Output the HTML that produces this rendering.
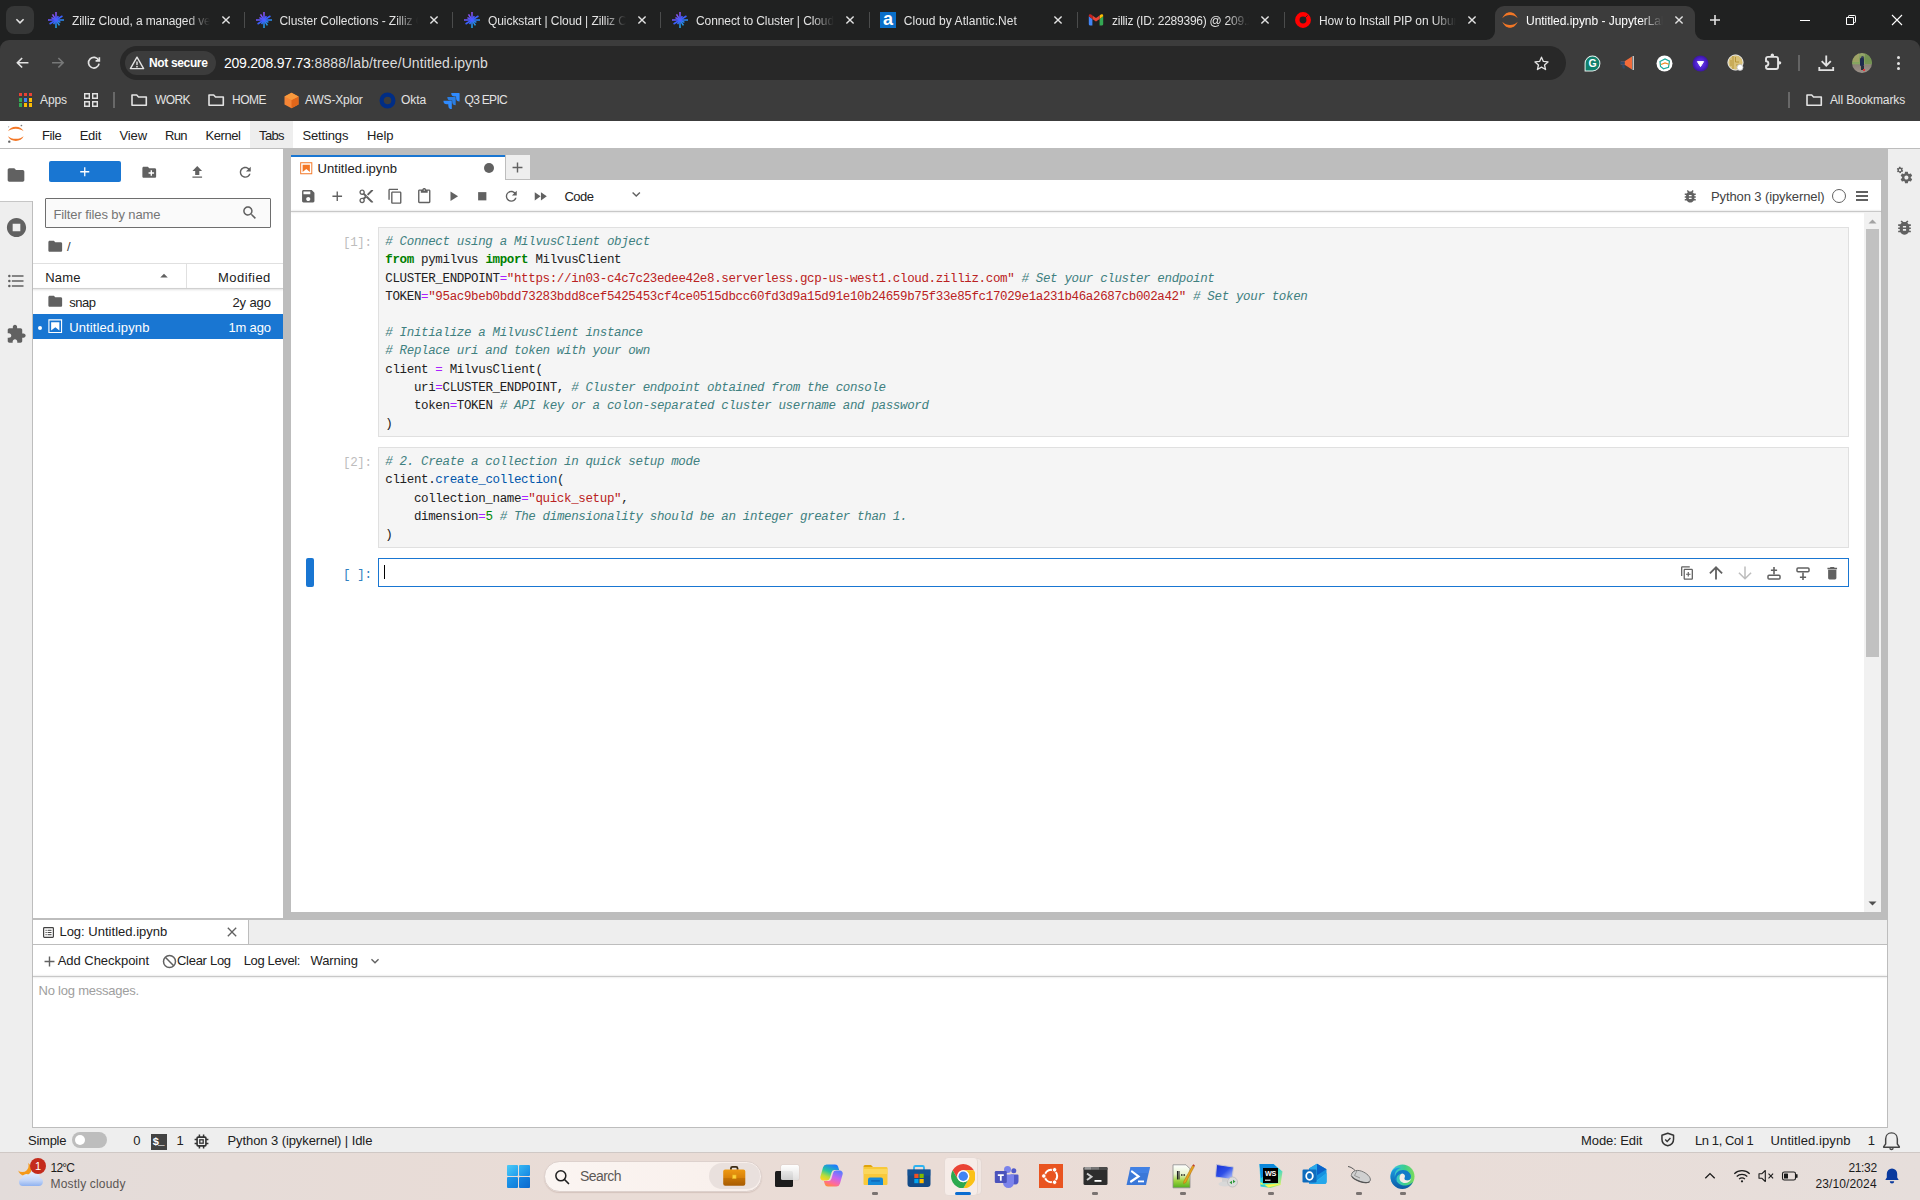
<!DOCTYPE html>
<html lang="en"><head><meta charset="utf-8"><title>Untitled.ipynb - JupyterLab</title>
<style>
html,body{margin:0;padding:0;}
body{width:1920px;height:1200px;overflow:hidden;position:relative;background:#fff;font-family:'Liberation Sans',sans-serif;}
.b{position:absolute;display:block;}
.t{position:absolute;white-space:pre;display:block;}
.code{position:absolute;white-space:pre;font-family:'Liberation Mono',monospace;font-size:12.5px;letter-spacing:-0.353px;line-height:18.19px;color:#212121;}
.code .c{color:#408080;font-style:italic;}
.code .k{color:#008000;font-weight:bold;}
.code .s{color:#ba2121;}
.code .o{color:#aa22ff;}
.code .p{color:#0055aa;}
.code .n{color:#008800;}
</style></head>
<body>
<div class="b" style="left:0px;top:121px;width:1920px;height:1031px;background:#fff;"></div>
<div class="b" style="left:0px;top:148px;width:1920px;height:1px;background:#bdbdbd;"></div>
<svg class="b" style="left:6.40px;top:124.40px;" width="19.6" height="19.6" viewBox="0 0 22 22"><path d="M2.2 8.2C3.6 4.9 7 3 11 3s7.4 1.9 8.8 5.2C17.7 6.3 14.6 5.3 11 5.3S4.3 6.3 2.2 8.2Z" fill="#f37726"/><path d="M2.2 13.8C3.6 17.1 7 19 11 19s7.4-1.9 8.8-5.200C17.7 15.700 14.6 16.700 11 16.700S4.300 15.700 2.200 13.800Z" fill="#f37726"/><circle cx="3.700" cy="19.800" r="1.350" fill="#616161"/><circle cx="17.300" cy="1.700" r=".95" fill="#767677"/><circle cx="3" cy="3.100" r=".7" fill="#989798"/></svg>
<div class="b" style="left:250px;top:121px;width:43px;height:27px;background:#eeeeee;"></div>
<span class="t " style="left:42.00px;top:125.50px;line-height:20px;font-family:'Liberation Sans', sans-serif;font-size:13px;font-weight:400;color:#212121;letter-spacing:-0.388px;">File</span>
<span class="t " style="left:79.70px;top:125.50px;line-height:20px;font-family:'Liberation Sans', sans-serif;font-size:13px;font-weight:400;color:#212121;letter-spacing:-0.277px;">Edit</span>
<span class="t " style="left:119.50px;top:125.50px;line-height:20px;font-family:'Liberation Sans', sans-serif;font-size:13px;font-weight:400;color:#212121;letter-spacing:-0.113px;">View</span>
<span class="t " style="left:165.00px;top:125.50px;line-height:20px;font-family:'Liberation Sans', sans-serif;font-size:13px;font-weight:400;color:#212121;letter-spacing:-0.720px;">Run</span>
<span class="t " style="left:205.50px;top:125.50px;line-height:20px;font-family:'Liberation Sans', sans-serif;font-size:13px;font-weight:400;color:#212121;letter-spacing:-0.413px;">Kernel</span>
<span class="t " style="left:259.00px;top:125.50px;line-height:20px;font-family:'Liberation Sans', sans-serif;font-size:13px;font-weight:400;color:#212121;letter-spacing:-0.617px;">Tabs</span>
<span class="t " style="left:302.50px;top:125.50px;line-height:20px;font-family:'Liberation Sans', sans-serif;font-size:13px;font-weight:400;color:#212121;letter-spacing:-0.148px;">Settings</span>
<span class="t " style="left:367.00px;top:125.50px;line-height:20px;font-family:'Liberation Sans', sans-serif;font-size:13px;font-weight:400;color:#212121;letter-spacing:-0.062px;">Help</span>
<div class="b" style="left:0px;top:149px;width:33px;height:979px;background:#eeeeee;"></div>
<div class="b" style="left:32px;top:201px;width:1px;height:927px;background:#bdbdbd;"></div>
<div class="b" style="left:0px;top:149px;width:33px;height:52px;background:#fff;"></div>
<div class="b" style="left:0px;top:201px;width:32px;height:1px;background:#c6c6c6;"></div>
<svg class="b" style="left:6.00px;top:164.70px;" width="20" height="20" viewBox="0 0 24 24"><path d="M10 4H4c-1.1 0-1.99.9-1.99 2L2 18c0 1.1.9 2 2 2h16c1.1 0 2-.9 2-2V8c0-1.1-.9-2-2-2h-8l-2-2z" fill="#616161"/></svg>
<svg class="b" style="left:4.50px;top:216.30px;" width="23" height="23" viewBox="0 0 24 24"><path d="M12 2C6.48 2 2 6.48 2 12s4.48 10 10 10 10-4.48 10-10S17.52 2 12 2zm4 14H8V8h8v8z" fill="#616161"/></svg>
<svg class="b" style="left:5.80px;top:271.00px;" width="20" height="20" viewBox="0 0 24 24"><path d="M7,5H21V7H7V5M7,13V11H21V13H7M4,4.5A1.5,1.5 0 0,1 5.5,6A1.5,1.5 0 0,1 4,7.5A1.5,1.5 0 0,1 2.5,6A1.5,1.5 0 0,1 4,4.5M4,10.5A1.5,1.5 0 0,1 5.5,12A1.5,1.5 0 0,1 4,13.5A1.5,1.5 0 0,1 2.5,12A1.5,1.5 0 0,1 4,10.5M7,19V17H21V19H7M4,16.5A1.5,1.5 0 0,1 5.5,18A1.5,1.5 0 0,1 4,19.5A1.5,1.5 0 0,1 2.5,18A1.5,1.5 0 0,1 4,16.5Z" fill="#616161"/></svg>
<svg class="b" style="left:5.95px;top:324.15px;" width="20.5" height="20.5" viewBox="0 0 24 24"><path d="M20.5 11H19V7c0-1.1-.9-2-2-2h-4V3.5C13 2.12 11.88 1 10.5 1S8 2.12 8 3.5V5H4c-1.1 0-1.99.9-1.99 2v3.8H3.5c1.49 0 2.7 1.21 2.7 2.7s-1.21 2.7-2.7 2.7H2V20c0 1.1.9 2 2 2h3.8v-1.5c0-1.49 1.21-2.7 2.7-2.7 1.49 0 2.7 1.21 2.7 2.7V22H17c1.1 0 2-.9 2-2v-4h1.5c1.38 0 2.5-1.12 2.5-2.5S21.88 11 20.5 11z" fill="#616161"/></svg>
<div class="b" style="left:283px;top:149px;width:1605px;height:771px;background:#bdbdbd;"></div>
<div class="b" style="left:1888px;top:149px;width:32px;height:979px;background:#eeeeee;"></div>
<div class="b" style="left:1887px;top:149px;width:1px;height:979px;background:#bdbdbd;"></div>
<svg class="b" style="left:1894.00px;top:164.70px;" width="20" height="20" viewBox="0 0 24 24"><path d="M14.9,17.45C16.25,17.45 17.35,16.35 17.35,15C17.35,13.65 16.25,12.55 14.9,12.55C13.54,12.55 12.45,13.65 12.45,15C12.45,16.35 13.54,17.45 14.9,17.45M20.1,15.68L21.58,16.84C21.71,16.95 21.75,17.13 21.66,17.29L20.26,19.71C20.17,19.86 20,19.92 19.83,19.86L18.09,19.16C17.73,19.44 17.33,19.67 16.91,19.85L16.64,21.7C16.62,21.87 16.47,22 16.3,22H13.5C13.32,22 13.18,21.87 13.15,21.7L12.89,19.85C12.46,19.67 12.07,19.44 11.71,19.16L9.96,19.86C9.81,19.92 9.62,19.86 9.54,19.71L8.14,17.29C8.05,17.13 8.09,16.95 8.22,16.84L9.7,15.68L9.65,15L9.7,14.31L8.22,13.16C8.09,13.05 8.05,12.86 8.14,12.71L9.54,10.29C9.62,10.13 9.81,10.07 9.96,10.13L11.71,10.84C12.07,10.56 12.46,10.32 12.89,10.15L13.15,8.29C13.18,8.13 13.32,8 13.5,8H16.3C16.47,8 16.62,8.13 16.64,8.29L16.91,10.15C17.33,10.32 17.73,10.56 18.09,10.84L19.83,10.13C20,10.07 20.17,10.13 20.26,10.29L21.66,12.71C21.75,12.86 21.71,13.05 21.58,13.16L20.1,14.31L20.15,15L20.1,15.68M7.33,7.44C8.05,7.37 8.58,6.73 8.5,6C8.44,5.29 7.8,4.76 7.07,4.84C6.36,4.9 5.83,5.54 5.91,6.27C5.97,6.98 6.61,7.5 7.33,7.44M10.03,6.05L10.9,6.6C10.97,6.65 11,6.75 10.96,6.84L10.31,8.22C10.27,8.3 10.18,8.35 10.09,8.32L9.12,8.04C8.94,8.21 8.74,8.36 8.5,8.47L8.44,9.47C8.44,9.56 8.37,9.64 8.27,9.65L6.75,9.78C6.66,9.79 6.57,9.73 6.55,9.64L6.31,8.65C6.07,8.58 5.84,8.47 5.63,8.34L4.72,8.78C4.64,8.82 4.54,8.8 4.5,8.72L3.62,7.5C3.56,7.39 3.57,7.29 3.64,7.22L4.38,6.5C4.32,6.27 4.3,6.03 4.31,5.79L3.45,5.23C3.38,5.18 3.35,5.09 3.39,5L4.04,3.61C4.08,3.53 4.17,3.5 4.26,3.5L5.22,3.8C5.4,3.62 5.6,3.47 5.82,3.37L5.9,2.36C5.91,2.27 6,2.19 6.08,2.19L7.6,2.05C7.69,2.05 7.78,2.1 7.8,2.19L8.04,3.19C8.28,3.25 8.5,3.36 8.72,3.5L9.63,3.05C9.71,3 9.81,3.04 9.87,3.11L10.73,4.37C10.79,4.44 10.78,4.54 10.71,4.61L9.97,5.31C10.03,5.56 10.05,5.8 10.03,6.05Z" fill="#616161"/></svg>
<svg class="b" style="left:1894.50px;top:218.30px;" width="19" height="19" viewBox="0 0 24 24"><path d="M20 8h-2.81c-.45-.78-1.07-1.45-1.82-1.96L17 4.41 15.59 3l-2.17 2.17C12.96 5.06 12.49 5 12 5c-.49 0-.96.06-1.41.17L8.41 3 7 4.41l1.62 1.63C7.88 6.55 7.26 7.22 6.81 8H4v2h2.09c-.05.33-.09.66-.09 1v1H4v2h2v1c0 .34.04.67.09 1H4v2h2.81c1.04 1.79 2.97 3 5.19 3s4.15-1.21 5.19-3H20v-2h-2.09c.05-.33.09-.66.09-1v-1h2v-2h-2v-1c0-.34-.04-.67-.09-1H20V8zm-6 8h-4v-2h4v2zm0-4h-4v-2h4v2z" fill="#616161"/></svg>
<div class="b" style="left:49px;top:161px;width:72px;height:21px;background:#1976d2;border-radius:2px;"></div>
<svg class="b" style="left:76.85px;top:164.05px;" width="15.5" height="15.5" viewBox="0 0 24 24"><path d="M19 13h-6v6h-2v-6H5v-2h6V5h2v6h6v2z" fill="#fff"/></svg>
<svg class="b" style="left:140.75px;top:164.05px;" width="16.5" height="16.5" viewBox="0 0 24 24"><path d="M20 6h-8l-2-2H4c-1.11 0-1.99.89-1.99 2L2 18c0 1.11.89 2 2 2h16c1.11 0 2-.89 2-2V8c0-1.11-.89-2-2-2zm-1 8h-3v3h-2v-3h-3v-2h3V9h2v3h3v2z" fill="#616161"/></svg>
<svg class="b" style="left:188.65px;top:163.55px;" width="16.5" height="16.5" viewBox="0 0 24 24"><path d="M9 16h6v-6h4l-7-7-7 7h4zm-4 2h14v2H5z" fill="#616161"/></svg>
<svg class="b" style="left:236.55px;top:163.75px;" width="16.5" height="16.5" viewBox="0 0 24 24"><path d="M17.65 6.35C16.2 4.9 14.21 4 12 4c-4.42 0-7.99 3.58-7.99 8s3.57 8 7.99 8c3.73 0 6.84-2.55 7.73-6h-2.08c-.82 2.33-3.04 4-5.65 4-3.31 0-6-2.69-6-6s2.69-6 6-6c1.66 0 3.14.69 4.22 1.78L13 11h7V4l-2.35 2.35z" fill="#616161"/></svg>
<div class="b" style="left:45px;top:198px;width:226px;height:30px;background:#fafafa;border:1px solid #6e6e6e;box-sizing:border-box;border-radius:1px;"></div>
<span class="t " style="left:53.40px;top:204.50px;line-height:20px;font-family:'Liberation Sans', sans-serif;font-size:13px;font-weight:400;color:#757575;letter-spacing:-0.100px;">Filter files by name</span>
<svg class="b" style="left:240.95px;top:204.25px;" width="17.5" height="17.5" viewBox="0 0 24 24"><path d="M15.5 14h-.79l-.28-.27C15.41 12.59 16 11.11 16 9.5 16 5.91 13.09 3 9.5 3S3 5.91 3 9.5 5.91 16 9.5 16c1.61 0 3.09-.59 4.23-1.57l.27.28v.79l5 4.99L20.49 19l-4.99-5zm-6 0C7.01 14 5 11.99 5 9.5S7.01 5 9.5 5 14 7.01 14 9.5 11.99 14 9.5 14z" fill="#616161"/></svg>
<svg class="b" style="left:46.65px;top:237.65px;" width="16.5" height="16.5" viewBox="0 0 24 24"><path d="M10 4H4c-1.1 0-1.99.9-1.99 2L2 18c0 1.1.9 2 2 2h16c1.1 0 2-.9 2-2V8c0-1.1-.9-2-2-2h-8l-2-2z" fill="#616161"/></svg>
<span class="t " style="left:67.00px;top:236.90px;line-height:20px;font-family:'Liberation Sans', sans-serif;font-size:13px;font-weight:400;color:#424242;letter-spacing:1.375px;">/</span>
<div class="b" style="left:33px;top:263px;width:250px;height:1px;background:#e0e0e0;"></div>
<div class="b" style="left:33px;top:288px;width:250px;height:1px;background:#d0d0d0;box-shadow:0 1px 2px rgba(0,0,0,.18);"></div>
<div class="b" style="left:186px;top:264px;width:1px;height:24px;background:#e0e0e0;"></div>
<span class="t " style="left:45.30px;top:267.80px;line-height:20px;font-family:'Liberation Sans', sans-serif;font-size:13px;font-weight:400;color:#212121;letter-spacing:0.128px;">Name</span>
<svg class="b" style="left:155.00px;top:267.20px;" width="18" height="18" viewBox="0 0 24 24"><path d="M7 14l5-5 5 5z" fill="#616161"/></svg>
<span class="t " style="left:218.00px;top:267.80px;line-height:20px;font-family:'Liberation Sans', sans-serif;font-size:13px;font-weight:400;color:#212121;letter-spacing:0.457px;">Modified</span>
<svg class="b" style="left:46.75px;top:292.95px;" width="16.5" height="16.5" viewBox="0 0 24 24"><path d="M10 4H4c-1.1 0-1.99.9-1.99 2L2 18c0 1.1.9 2 2 2h16c1.1 0 2-.9 2-2V8c0-1.1-.9-2-2-2h-8l-2-2z" fill="#616161"/></svg>
<span class="t " style="left:69.20px;top:292.90px;line-height:20px;font-family:'Liberation Sans', sans-serif;font-size:13px;font-weight:400;color:#212121;letter-spacing:-0.451px;">snap</span>
<span class="t " style="left:232.50px;top:292.90px;line-height:20px;font-family:'Liberation Sans', sans-serif;font-size:13px;font-weight:400;color:#212121;letter-spacing:-0.124px;">2y ago</span>
<div class="b" style="left:33px;top:314px;width:250px;height:25px;background:#1976d2;"></div>
<div class="b" style="left:37.8px;top:325.7px;width:4px;height:4px;border-radius:50%;background:#fff"></div>
<svg class="b" style="left:46.75px;top:317.75px;" width="16.5" height="16.5" viewBox="0 0 22 22"><path d="M18.7 3.3v15.4H3.3V3.3h15.4m1.5-1.5H1.8v18.3h18.3l.1-18.3z" fill="#fff"/><path d="M16.5 16.5l-5.4-4.3-5.6 4.3v-11h11z" fill="#fff"/></svg>
<span class="t " style="left:69.20px;top:317.90px;line-height:20px;font-family:'Liberation Sans', sans-serif;font-size:13px;font-weight:400;color:#fff;letter-spacing:0.108px;">Untitled.ipynb</span>
<span class="t " style="left:228.40px;top:317.90px;line-height:20px;font-family:'Liberation Sans', sans-serif;font-size:13px;font-weight:400;color:#fff;letter-spacing:-0.162px;">1m ago</span>
<div class="b" style="left:33px;top:339px;width:250px;height:579px;background:#fff;"></div>
<div class="b" style="left:291px;top:155px;width:214px;height:25px;background:#fff;"></div>
<div class="b" style="left:291px;top:155px;width:214px;height:2px;background:#1976d2;"></div>
<div class="b" style="left:505px;top:154px;width:25.5px;height:26px;background:#eeeeee;border:1px solid #bdbdbd;border-bottom:none;box-sizing:border-box;"></div>
<div class="b" style="left:505px;top:179px;width:1376px;height:1px;background:#bdbdbd;"></div>
<svg class="b" style="left:298.75px;top:160.75px;" width="14.5" height="14.5" viewBox="0 0 22 22"><path d="M18.7 3.3v15.4H3.3V3.3h15.4m1.5-1.5H1.8v18.3h18.3l.1-18.3z" fill="#f37726"/><path d="M16.5 16.5l-5.4-4.3-5.6 4.3v-11h11z" fill="#f37726"/></svg>
<span class="t " style="left:317.50px;top:159.20px;line-height:20px;font-family:'Liberation Sans', sans-serif;font-size:13px;font-weight:400;color:#212121;letter-spacing:0.051px;">Untitled.ipynb</span>
<div class="b" style="left:484px;top:163px;width:10px;height:10px;border-radius:50%;background:#616161"></div>
<svg class="b" style="left:509.20px;top:158.70px;" width="17" height="17" viewBox="0 0 24 24"><path d="M19 13h-6v6h-2v-6H5v-2h6V5h2v6h6v2z" fill="#616161"/></svg>
<div class="b" style="left:291px;top:180px;width:1590px;height:732px;background:#fff;"></div>
<div class="b" style="left:291px;top:211px;width:1590px;height:1px;background:#c8c8c8;box-shadow:0 0 2px rgba(0,0,0,.24);"></div>
<svg class="b" style="left:299.75px;top:187.75px;" width="16.5" height="16.5" viewBox="0 0 24 24"><path d="M17 3H5c-1.11 0-2 .9-2 2v14c0 1.1.89 2 2 2h14c1.1 0 2-.9 2-2V7l-4-4zm-5 16c-1.66 0-3-1.34-3-3s1.34-3 3-3 3 1.34 3 3-1.34 3-3 3zm3-10H5V5h10v4z" fill="#616161"/></svg>
<svg class="b" style="left:329.25px;top:187.75px;" width="16.5" height="16.5" viewBox="0 0 24 24"><path d="M19 13h-6v6h-2v-6H5v-2h6V5h2v6h6v2z" fill="#616161"/></svg>
<svg class="b" style="left:357.55px;top:187.75px;" width="16.5" height="16.5" viewBox="0 0 24 24"><path d="M9.64 7.64c.23-.5.36-1.05.36-1.64 0-2.21-1.79-4-4-4S2 3.79 2 6s1.79 4 4 4c.59 0 1.14-.13 1.64-.36L10 12l-2.36 2.36C7.14 14.13 6.59 14 6 14c-2.21 0-4 1.79-4 4s1.79 4 4 4 4-1.79 4-4c0-.59-.13-1.14-.36-1.64L12 14l7 7h3v-1L9.64 7.64zM6 8c-1.1 0-2-.89-2-2s.9-2 2-2 2 .89 2 2-.9 2-2 2zm0 12c-1.1 0-2-.89-2-2s.9-2 2-2 2 .89 2 2-.9 2-2 2zm6-7.5c-.28 0-.5-.22-.5-.5s.22-.5.5-.5.5.22.5.5-.22.5-.5.5zM19 3l-6 6 2 2 7-7V3z" fill="#616161"/></svg>
<svg class="b" style="left:387.25px;top:187.75px;" width="16.5" height="16.5" viewBox="0 0 24 24"><path d="M16 1H4c-1.1 0-2 .9-2 2v14h2V3h12V1zm3 4H8c-1.1 0-2 .9-2 2v14c0 1.1.9 2 2 2h11c1.1 0 2-.9 2-2V7c0-1.1-.9-2-2-2zm0 16H8V7h11v14z" fill="#616161"/></svg>
<svg class="b" style="left:415.50px;top:187.75px;" width="16.5" height="16.5" viewBox="0 0 24 24"><path d="M19 2h-4.18C14.4.84 13.3 0 12 0c-1.3 0-2.4.84-2.82 2H5c-1.1 0-2 .9-2 2v16c0 1.1.9 2 2 2h14c1.1 0 2-.9 2-2V4c0-1.1-.9-2-2-2zm-7 0c.55 0 1 .45 1 1s-.45 1-1 1-1-.45-1-1 .45-1 1-1zm7 18H5V4h2v3h10V4h2v16z" fill="#616161"/></svg>
<svg class="b" style="left:445.05px;top:187.75px;" width="16.5" height="16.5" viewBox="0 0 24 24"><path d="M8 5v14l11-7z" fill="#616161"/></svg>
<svg class="b" style="left:474.25px;top:187.75px;" width="16.5" height="16.5" viewBox="0 0 24 24"><path d="M6 6h12v12H6z" fill="#616161"/></svg>
<svg class="b" style="left:502.55px;top:187.75px;" width="16.5" height="16.5" viewBox="0 0 24 24"><path d="M17.65 6.35C16.2 4.9 14.21 4 12 4c-4.42 0-7.99 3.58-7.99 8s3.57 8 7.99 8c3.73 0 6.84-2.55 7.73-6h-2.08c-.82 2.33-3.04 4-5.65 4-3.31 0-6-2.69-6-6s2.69-6 6-6c1.66 0 3.14.69 4.22 1.78L13 11h7V4l-2.35 2.35z" fill="#616161"/></svg>
<svg class="b" style="left:531.75px;top:187.75px;" width="16.5" height="16.5" viewBox="0 0 24 24"><path d="M4 18l8.5-6L4 6v12zm9-12v12l8.5-6L13 6z" fill="#616161"/></svg>
<span class="t " style="left:564.40px;top:187.20px;line-height:20px;font-family:'Liberation Sans', sans-serif;font-size:13px;font-weight:400;color:#212121;letter-spacing:-0.495px;">Code</span>
<svg class="b" style="left:627.75px;top:186.35px;" width="16.5" height="16.5" viewBox="0 0 24 24"><path d="M7.41 8.59L12 13.17l4.59-4.58L18 10l-6 6-6-6 1.41-1.41z" fill="#616161"/></svg>
<svg class="b" style="left:1681.55px;top:187.75px;" width="16.5" height="16.5" viewBox="0 0 24 24"><path d="M20 8h-2.81c-.45-.78-1.07-1.45-1.82-1.96L17 4.41 15.59 3l-2.17 2.17C12.96 5.06 12.49 5 12 5c-.49 0-.96.06-1.41.17L8.41 3 7 4.41l1.62 1.63C7.88 6.55 7.26 7.22 6.81 8H4v2h2.09c-.05.33-.09.66-.09 1v1H4v2h2v1c0 .34.04.67.09 1H4v2h2.81c1.04 1.79 2.97 3 5.19 3s4.15-1.21 5.19-3H20v-2h-2.09c.05-.33.09-.66.09-1v-1h2v-2h-2v-1c0-.34-.04-.67-.09-1H20V8zm-6 8h-4v-2h4v2zm0-4h-4v-2h4v2z" fill="#616161"/></svg>
<span class="t " style="left:1711.00px;top:187.20px;line-height:20px;font-family:'Liberation Sans', sans-serif;font-size:13px;font-weight:400;color:#424242;letter-spacing:-0.111px;">Python 3 (ipykernel)</span>
<div class="b" style="left:1831.75px;top:189px;width:14px;height:14px;border-radius:50%;border:1.4px solid #616161;box-sizing:border-box"></div>
<div class="b" style="left:1856px;top:190.5px;width:12px;height:2.1999999999999886px;background:#616161;"></div>
<div class="b" style="left:1856px;top:194.9px;width:12px;height:2.1999999999999886px;background:#616161;"></div>
<div class="b" style="left:1856px;top:199.3px;width:12px;height:2.1999999999999886px;background:#616161;"></div>
<div class="b" style="left:378px;top:227px;width:1471px;height:210px;background:#f5f5f5;border:1px solid #e0e0e0;box-sizing:border-box;"></div>
<div class="b" style="left:378px;top:447px;width:1471px;height:101px;background:#f5f5f5;border:1px solid #e0e0e0;box-sizing:border-box;"></div>
<div class="b" style="left:378px;top:558px;width:1471px;height:29px;background:#fff;border:1px solid #1976d2;box-sizing:border-box;"></div>
<div class="b" style="left:306px;top:558px;width:8px;height:29px;background:#1976d2;border-radius:2px;"></div>
<div class="code" style="left:385.3px;top:233.30px"><span class="c"># Connect using a MilvusClient object</span></div><div class="code" style="left:385.3px;top:251.49px"><span class="k">from</span> pymilvus <span class="k">import</span> MilvusClient</div><div class="code" style="left:385.3px;top:269.68px">CLUSTER_ENDPOINT<span class="o">=</span><span class="s">"https://in03-c4c7c23edee42e8.serverless.gcp-us-west1.cloud.zilliz.com"</span> <span class="c"># Set your cluster endpoint</span></div><div class="code" style="left:385.3px;top:287.87px">TOKEN<span class="o">=</span><span class="s">"95ac9beb0bdd73283bdd8cef5425453cf4ce0515dbcc60fd3d9a15d91e10b24659b75f33e85fc17029e1a231b46a2687cb002a42"</span> <span class="c"># Set your token</span></div><div class="code" style="left:385.3px;top:324.25px"><span class="c"># Initialize a MilvusClient instance</span></div><div class="code" style="left:385.3px;top:342.44px"><span class="c"># Replace uri and token with your own</span></div><div class="code" style="left:385.3px;top:360.63px">client <span class="o">=</span> MilvusClient(</div><div class="code" style="left:385.3px;top:378.82px">    uri<span class="o">=</span>CLUSTER_ENDPOINT, <span class="c"># Cluster endpoint obtained from the console</span></div><div class="code" style="left:385.3px;top:397.01px">    token<span class="o">=</span>TOKEN <span class="c"># API key or a colon-separated cluster username and password</span></div><div class="code" style="left:385.3px;top:415.20px">)</div>
<div class="code" style="left:385.3px;top:453.30px"><span class="c"># 2. Create a collection in quick setup mode</span></div><div class="code" style="left:385.3px;top:471.49px">client.<span class="p">create_collection</span>(</div><div class="code" style="left:385.3px;top:489.68px">    collection_name<span class="o">=</span><span class="s">"quick_setup"</span>,</div><div class="code" style="left:385.3px;top:507.87px">    dimension<span class="o">=</span><span class="n">5</span> <span class="c"># The dimensionality should be an integer greater than 1.</span></div><div class="code" style="left:385.3px;top:526.06px">)</div>
<div class="code" style="left:343px;top:234.40px;color:#bdbdbd">[1]:</div>
<div class="code" style="left:343px;top:454.40px;color:#bdbdbd">[2]:</div>
<div class="code" style="left:343px;top:565.50px;color:#307fc1">[ ]:</div>
<div class="b" style="left:384px;top:564.5px;width:1.1000000000000227px;height:14.100000000000023px;background:#000;"></div>
<svg class="b" style="left:1679.00px;top:565.00px;" width="16" height="16" viewBox="0 0 16.5 17.600"><path d="M11.300 1.300H3.100c-.75 0-1.400.6-1.400 1.400v9.500h1.400V2.700h8.200V1.300z" fill="#616161"/><path d="M13.400 4H5.900c-.75 0-1.400.6-1.400 1.400v9.500c0 .750.600 1.400 1.400 1.400h7.500c.750 0 1.400-.600 1.400-1.400V5.400c0-.750-.600-1.400-1.400-1.400zm0 10.900H5.900V5.400h7.500v9.500z" fill="#616161"/><path d="M9 7.700h1.300v1.800h1.800v1.300h-1.800v1.800H9v-1.800H7.200V9.500H9z" fill="#616161"/></svg>
<svg class="b" style="left:1707.80px;top:565.00px;" width="16" height="16" viewBox="0 0 16 16"><path d="M8 14.600V2.700M1.900 8.300L8 2.300l6.100 6" fill="none" stroke="#616161" stroke-width="1.800"/></svg>
<svg class="b" style="left:1737.00px;top:565.00px;" width="16" height="16" viewBox="0 0 16 16"><path d="M8 1.400v11.900M1.900 7.700L8 13.700l6.100-6" fill="none" stroke="#bdbdbd" stroke-width="1.500"/></svg>
<svg class="b" style="left:1766.00px;top:565.00px;" width="16" height="16" viewBox="0 0 16 16"><path d="M8 2v7.500M4.900 5.300h6.200" stroke="#616161" stroke-width="1.600" fill="none"/><rect x="2" y="10.200" width="12" height="3.800" rx="1" fill="none" stroke="#616161" stroke-width="1.500"/></svg>
<svg class="b" style="left:1795.00px;top:565.00px;" width="16" height="16" viewBox="0 0 16 16"><path d="M8 7.400v7.600M4.900 12.300h6.200" stroke="#616161" stroke-width="1.600" fill="none"/><rect x="2" y="2.950" width="12" height="3.700" rx="1" fill="none" stroke="#616161" stroke-width="1.500"/></svg>
<svg class="b" style="left:1823.75px;top:564.75px;" width="16.5" height="16.5" viewBox="0 0 24 24"><path d="M6 19c0 1.1.9 2 2 2h8c1.1 0 2-.9 2-2V7H6v12zM19 4h-3.500l-1-1h-5l-1 1H5v2h14V4z" fill="#616161"/></svg>
<div class="b" style="left:1864px;top:212px;width:17px;height:700px;background:#f1f1f1;"></div>
<div class="b" style="left:1866px;top:229px;width:13px;height:428px;background:#c1c1c1;"></div>
<svg class="b" style="left:1868.00px;top:217.00px;" width="9" height="9" viewBox="0 0 9 9"><path d="M0.500 6.500L4.500 2.500l4 4z" fill="#a3a3a3"/></svg>
<svg class="b" style="left:1868.00px;top:898.70px;" width="9" height="9" viewBox="0 0 9 9"><path d="M0.500 2.500L4.500 6.500l4-4z" fill="#505050"/></svg>
<div class="b" style="left:33px;top:918px;width:1854px;height:2px;background:#bdbdbd;"></div>
<div class="b" style="left:33px;top:920px;width:1854px;height:24px;background:#eeeeee;"></div>
<div class="b" style="left:33px;top:920px;width:215px;height:24px;background:#fff;"></div>
<div class="b" style="left:248px;top:920px;width:1px;height:24px;background:#bdbdbd;"></div>
<div class="b" style="left:33px;top:944px;width:1854px;height:1px;background:#bdbdbd;"></div>
<svg class="b" style="left:42.50px;top:926.50px;" width="11" height="11" viewBox="0 0 11 11"><rect x=".6" y=".6" width="9.800" height="9.800" rx=".8" fill="none" stroke="#424242" stroke-width="1.200"/><path d="M2.500 3.300h1.200M4.600 3.300h3.900M2.500 5.500h1.200M4.600 5.500h3.900M2.500 7.700h1.200M4.600 7.700h3.900" stroke="#424242" stroke-width="1"/></svg>
<span class="t " style="left:59.40px;top:922.30px;line-height:20px;font-family:'Liberation Sans', sans-serif;font-size:13px;font-weight:400;color:#212121;letter-spacing:0.011px;">Log: Untitled.ipynb</span>
<svg class="b" style="left:223.90px;top:923.90px;" width="16" height="16" viewBox="0 0 24 24"><path d="M19 6.41L17.59 5 12 10.59 6.41 5 5 6.41 10.59 12 5 17.59 6.41 19 12 13.41 17.59 19 19 17.59 13.41 12z" fill="#616161"/></svg>
<div class="b" style="left:33px;top:945px;width:1854px;height:31px;background:#fff;"></div>
<div class="b" style="left:33px;top:976px;width:1854px;height:1px;background:#c8c8c8;box-shadow:0 0 2px rgba(0,0,0,.24);"></div>
<svg class="b" style="left:40.50px;top:952.70px;" width="17" height="17" viewBox="0 0 24 24"><path d="M19 13h-6v6h-2v-6H5v-2h6V5h2v6h6v2z" fill="#616161"/></svg>
<span class="t " style="left:57.70px;top:951.30px;line-height:20px;font-family:'Liberation Sans', sans-serif;font-size:13px;font-weight:400;color:#212121;letter-spacing:-0.034px;">Add Checkpoint</span>
<svg class="b" style="left:161.50px;top:953.50px;" width="15" height="15" viewBox="0 0 15 15"><circle cx="7.500" cy="7.500" r="6" fill="none" stroke="#616161" stroke-width="1.500"/><path d="M3.300 3.300L11.700 11.700" stroke="#616161" stroke-width="1.500"/></svg>
<span class="t " style="left:177.00px;top:951.30px;line-height:20px;font-family:'Liberation Sans', sans-serif;font-size:13px;font-weight:400;color:#212121;letter-spacing:-0.286px;">Clear Log</span>
<span class="t " style="left:243.75px;top:951.30px;line-height:20px;font-family:'Liberation Sans', sans-serif;font-size:13px;font-weight:400;color:#212121;letter-spacing:-0.375px;">Log Level:</span>
<span class="t " style="left:310.40px;top:951.30px;line-height:20px;font-family:'Liberation Sans', sans-serif;font-size:13px;font-weight:400;color:#212121;letter-spacing:-0.048px;">Warning</span>
<svg class="b" style="left:367.00px;top:952.60px;" width="16" height="16" viewBox="0 0 24 24"><path d="M7.41 8.59L12 13.17l4.59-4.58L18 10l-6 6-6-6 1.41-1.41z" fill="#616161"/></svg>
<span class="t " style="left:38.50px;top:980.90px;line-height:20px;font-family:'Liberation Sans', sans-serif;font-size:13px;font-weight:400;color:#9e9e9e;letter-spacing:-0.223px;">No log messages.</span>
<div class="b" style="left:33px;top:1127px;width:1854px;height:1px;background:#bdbdbd;"></div>
<div class="b" style="left:0px;top:1128px;width:1920px;height:24px;background:#eeeeee;"></div>
<span class="t " style="left:28.00px;top:1131.10px;line-height:20px;font-family:'Liberation Sans', sans-serif;font-size:13px;font-weight:400;color:#212121;letter-spacing:-0.250px;">Simple</span>
<div class="b" style="left:72px;top:1132px;width:35.3px;height:16px;background:#bdbdbd;border-radius:8px;"></div>
<div class="b" style="left:75px;top:1135px;width:10px;height:10px;border-radius:50%;background:#fff"></div>
<span class="t " style="left:133.30px;top:1131.10px;line-height:20px;font-family:'Liberation Sans', sans-serif;font-size:13px;font-weight:400;color:#212121;letter-spacing:-1.234px;">0</span>
<div class="b" style="left:151px;top:1134.3px;width:15.900000000000006px;height:15.400000000000091px;background:#424242;"></div>
<span class="t" style="left:152.6px;top:1135.6px;font:bold 11px/13px 'Liberation Mono', monospace;color:#fff;letter-spacing:-1.1px">$_</span>
<span class="t " style="left:176.50px;top:1131.10px;line-height:20px;font-family:'Liberation Sans', sans-serif;font-size:13px;font-weight:400;color:#212121;letter-spacing:-1.734px;">1</span>
<svg class="b" style="left:193.60px;top:1133.50px;" width="15" height="15" viewBox="0 0 15 15"><rect x="3.100" y="3.100" width="8.800" height="8.800" rx="1" fill="none" stroke="#333" stroke-width="1.600"/><rect x="5.800" y="5.800" width="3.400" height="3.400" fill="none" stroke="#333" stroke-width="1.300"/><path d="M5.400 .6v2.400M9.600 .6v2.400M5.400 12v2.400M9.600 12v2.400M.6 5.400h2.400M.6 9.600h2.400M12 5.400h2.400M12 9.600h2.400" stroke="#333" stroke-width="1.500"/></svg>
<span class="t " style="left:227.50px;top:1131.10px;line-height:20px;font-family:'Liberation Sans', sans-serif;font-size:13px;font-weight:400;color:#212121;letter-spacing:-0.088px;">Python 3 (ipykernel) | Idle</span>
<span class="t " style="left:1581.00px;top:1130.90px;line-height:20px;font-family:'Liberation Sans', sans-serif;font-size:13px;font-weight:400;color:#212121;letter-spacing:-0.086px;">Mode: Edit</span>
<svg class="b" style="left:1660.35px;top:1131.65px;" width="15.5" height="15.5" viewBox="-0.75 -0.4 15.5 15.5"><path d="M7 .8L12.800 2.900V6.800C12.800 10 10.200 12.600 7 13.400C3.800 12.600 1.200 10 1.200 6.800V2.900Z" fill="none" stroke="#333" stroke-width="1.500" stroke-linejoin="round"/><path d="M4.500 7.100l1.900 1.900 3.300-3.500" fill="none" stroke="#333" stroke-width="1.400"/></svg>
<span class="t " style="left:1695.00px;top:1130.90px;line-height:20px;font-family:'Liberation Sans', sans-serif;font-size:13px;font-weight:400;color:#212121;letter-spacing:-0.416px;">Ln 1, Col 1</span>
<span class="t " style="left:1770.60px;top:1130.90px;line-height:20px;font-family:'Liberation Sans', sans-serif;font-size:13px;font-weight:400;color:#212121;letter-spacing:0.087px;">Untitled.ipynb</span>
<span class="t " style="left:1867.80px;top:1130.90px;line-height:20px;font-family:'Liberation Sans', sans-serif;font-size:13px;font-weight:400;color:#212121;letter-spacing:-1.734px;">1</span>
<svg class="b" style="left:1881.40px;top:1130.70px;" width="21" height="21" viewBox="0 0 18 18"><path d="M9 1.600c3 0 5 2.300 5 5.300v4.300l1.700 2.200v.6H2.300v-.6L4 11.200V6.900c0-3 2-5.300 5-5.300z" fill="none" stroke="#444" stroke-width="1.250" stroke-linejoin="round"/><path d="M7.500 14.800a1.600 1.600 0 0 0 3 0" fill="none" stroke="#444" stroke-width="1.250"/></svg>
<div class="b" style="left:0px;top:0px;width:1920px;height:52px;background:#202121;"></div>
<div class="b" style="left:0px;top:40px;width:1920px;height:81px;background:#3c3c3c;border-radius:9px 9px 0 0;"></div>
<div class="b" style="left:6px;top:6px;width:28px;height:28px;background:#363737;border-radius:8px;"></div>
<svg class="b" style="left:12.00px;top:12.50px;" width="16" height="16" viewBox="0 0 16 16"><path d="M4.4 6.3L8 9.9L11.6 6.3" stroke="#e3e3e3" stroke-width="1.6" fill="none"/></svg>
<div class="b" style="left:1494.5px;top:6px;width:200.5px;height:35px;background:#3c3c3c;border-radius:9px 9px 0 0;"></div>
<svg class="b" style="left:1485.5px;top:31px" width="9" height="9" viewBox="0 0 9 9"><path d="M9 0V9H0A9 9 0 0 0 9 0Z" fill="#3c3c3c"/></svg>
<svg class="b" style="left:1695px;top:31px" width="9" height="9" viewBox="0 0 9 9"><path d="M0 0V9H9A9 9 0 0 1 0 0Z" fill="#3c3c3c"/></svg>
<div class="b" style="left:244.0px;top:12px;width:1.0px;height:16px;background:#4b4c4c;width:1.2px;"></div>
<div class="b" style="left:452.0px;top:12px;width:1.0px;height:16px;background:#4b4c4c;width:1.2px;"></div>
<div class="b" style="left:660.25px;top:12px;width:1.0px;height:16px;background:#4b4c4c;width:1.2px;"></div>
<div class="b" style="left:868.5px;top:12px;width:1.0px;height:16px;background:#4b4c4c;width:1.2px;"></div>
<div class="b" style="left:1076.5px;top:12px;width:1.0px;height:16px;background:#4b4c4c;width:1.2px;"></div>
<div class="b" style="left:1284.0px;top:12px;width:1.0px;height:16px;background:#4b4c4c;width:1.2px;"></div>
<svg class="b" style="left:48.00px;top:12.00px;" width="16" height="16" viewBox="0 0 16 16"><defs><linearGradient id="zg56" gradientUnits="userSpaceOnUse" x1="3" y1="1" x2="12" y2="15"><stop offset="0" stop-color="#b14df0"/><stop offset=".5" stop-color="#3b5bff"/><stop offset="1" stop-color="#18b6d8"/></linearGradient></defs><g stroke="url(#zg56)" stroke-width="1.55" stroke-linecap="butt"><line x1="8" y1="8" x2="8.00" y2="0.00"/><line x1="8" y1="8" x2="8.00" y2="16.00"/><line x1="8" y1="8" x2="16.20" y2="8.00"/><line x1="8" y1="8" x2="-0.20" y2="8.00"/><line x1="8" y1="8" x2="14.45" y2="3.97"/><line x1="8" y1="8" x2="1.55" y2="12.03"/><line x1="8" y1="8" x2="4.50" y2="2.40"/><line x1="8" y1="8" x2="11.39" y2="13.43"/><line x1="8" y1="8" x2="10.30" y2="4.02"/><line x1="8" y1="8" x2="5.60" y2="12.16"/><line x1="8" y1="8" x2="3.41" y2="5.56"/><line x1="8" y1="8" x2="12.41" y2="10.35"/></g><circle cx="8" cy="8" r="1.6" fill="#4d5cff"/></svg>
<span class="t" style="left:72px;top:12.1px;width:137.5px;overflow:hidden;line-height:18px;font-family:'Liberation Sans', sans-serif;font-size:12px;font-weight:400;color:#e3e3e3;letter-spacing:-0.105px;-webkit-mask-image:linear-gradient(to right,#000 calc(100% - 22px),transparent);mask-image:linear-gradient(to right,#000 calc(100% - 22px),transparent);">Zilliz Cloud, a managed vector database</span>
<svg class="b" style="left:218.00px;top:12.00px;" width="16" height="16" viewBox="0 0 16 16"><path d="M4.4 4.4L11.6 11.6M11.6 4.4L4.4 11.6" stroke="#e3e3e3" stroke-width="1.4" fill="none"/></svg>
<svg class="b" style="left:256.00px;top:12.00px;" width="16" height="16" viewBox="0 0 16 16"><defs><linearGradient id="zg264" gradientUnits="userSpaceOnUse" x1="3" y1="1" x2="12" y2="15"><stop offset="0" stop-color="#b14df0"/><stop offset=".5" stop-color="#3b5bff"/><stop offset="1" stop-color="#18b6d8"/></linearGradient></defs><g stroke="url(#zg264)" stroke-width="1.55" stroke-linecap="butt"><line x1="8" y1="8" x2="8.00" y2="0.00"/><line x1="8" y1="8" x2="8.00" y2="16.00"/><line x1="8" y1="8" x2="16.20" y2="8.00"/><line x1="8" y1="8" x2="-0.20" y2="8.00"/><line x1="8" y1="8" x2="14.45" y2="3.97"/><line x1="8" y1="8" x2="1.55" y2="12.03"/><line x1="8" y1="8" x2="4.50" y2="2.40"/><line x1="8" y1="8" x2="11.39" y2="13.43"/><line x1="8" y1="8" x2="10.30" y2="4.02"/><line x1="8" y1="8" x2="5.60" y2="12.16"/><line x1="8" y1="8" x2="3.41" y2="5.56"/><line x1="8" y1="8" x2="12.41" y2="10.35"/></g><circle cx="8" cy="8" r="1.6" fill="#4d5cff"/></svg>
<span class="t" style="left:279.5px;top:12.1px;width:138.0px;overflow:hidden;line-height:18px;font-family:'Liberation Sans', sans-serif;font-size:12px;font-weight:400;color:#e3e3e3;letter-spacing:-0.061px;-webkit-mask-image:linear-gradient(to right,#000 calc(100% - 22px),transparent);mask-image:linear-gradient(to right,#000 calc(100% - 22px),transparent);">Cluster Collections - Zilliz Cloud</span>
<svg class="b" style="left:426.00px;top:12.00px;" width="16" height="16" viewBox="0 0 16 16"><path d="M4.4 4.4L11.6 11.6M11.6 4.4L4.4 11.6" stroke="#e3e3e3" stroke-width="1.4" fill="none"/></svg>
<svg class="b" style="left:464.00px;top:12.00px;" width="16" height="16" viewBox="0 0 16 16"><defs><linearGradient id="zg472" gradientUnits="userSpaceOnUse" x1="3" y1="1" x2="12" y2="15"><stop offset="0" stop-color="#b14df0"/><stop offset=".5" stop-color="#3b5bff"/><stop offset="1" stop-color="#18b6d8"/></linearGradient></defs><g stroke="url(#zg472)" stroke-width="1.55" stroke-linecap="butt"><line x1="8" y1="8" x2="8.00" y2="0.00"/><line x1="8" y1="8" x2="8.00" y2="16.00"/><line x1="8" y1="8" x2="16.20" y2="8.00"/><line x1="8" y1="8" x2="-0.20" y2="8.00"/><line x1="8" y1="8" x2="14.45" y2="3.97"/><line x1="8" y1="8" x2="1.55" y2="12.03"/><line x1="8" y1="8" x2="4.50" y2="2.40"/><line x1="8" y1="8" x2="11.39" y2="13.43"/><line x1="8" y1="8" x2="10.30" y2="4.02"/><line x1="8" y1="8" x2="5.60" y2="12.16"/><line x1="8" y1="8" x2="3.41" y2="5.56"/><line x1="8" y1="8" x2="12.41" y2="10.35"/></g><circle cx="8" cy="8" r="1.6" fill="#4d5cff"/></svg>
<span class="t" style="left:488px;top:12.1px;width:137.5px;overflow:hidden;line-height:18px;font-family:'Liberation Sans', sans-serif;font-size:12px;font-weight:400;color:#e3e3e3;letter-spacing:-0.072px;-webkit-mask-image:linear-gradient(to right,#000 calc(100% - 22px),transparent);mask-image:linear-gradient(to right,#000 calc(100% - 22px),transparent);">Quickstart | Cloud | Zilliz Cloud Developer Hub</span>
<svg class="b" style="left:634.00px;top:12.00px;" width="16" height="16" viewBox="0 0 16 16"><path d="M4.4 4.4L11.6 11.6M11.6 4.4L4.4 11.6" stroke="#e3e3e3" stroke-width="1.4" fill="none"/></svg>
<svg class="b" style="left:672.00px;top:12.00px;" width="16" height="16" viewBox="0 0 16 16"><defs><linearGradient id="zg680" gradientUnits="userSpaceOnUse" x1="3" y1="1" x2="12" y2="15"><stop offset="0" stop-color="#b14df0"/><stop offset=".5" stop-color="#3b5bff"/><stop offset="1" stop-color="#18b6d8"/></linearGradient></defs><g stroke="url(#zg680)" stroke-width="1.55" stroke-linecap="butt"><line x1="8" y1="8" x2="8.00" y2="0.00"/><line x1="8" y1="8" x2="8.00" y2="16.00"/><line x1="8" y1="8" x2="16.20" y2="8.00"/><line x1="8" y1="8" x2="-0.20" y2="8.00"/><line x1="8" y1="8" x2="14.45" y2="3.97"/><line x1="8" y1="8" x2="1.55" y2="12.03"/><line x1="8" y1="8" x2="4.50" y2="2.40"/><line x1="8" y1="8" x2="11.39" y2="13.43"/><line x1="8" y1="8" x2="10.30" y2="4.02"/><line x1="8" y1="8" x2="5.60" y2="12.16"/><line x1="8" y1="8" x2="3.41" y2="5.56"/><line x1="8" y1="8" x2="12.41" y2="10.35"/></g><circle cx="8" cy="8" r="1.6" fill="#4d5cff"/></svg>
<span class="t" style="left:696px;top:12.1px;width:137.5px;overflow:hidden;line-height:18px;font-family:'Liberation Sans', sans-serif;font-size:12px;font-weight:400;color:#e3e3e3;letter-spacing:-0.097px;-webkit-mask-image:linear-gradient(to right,#000 calc(100% - 22px),transparent);mask-image:linear-gradient(to right,#000 calc(100% - 22px),transparent);">Connect to Cluster | Cloud | Zilliz Cloud</span>
<svg class="b" style="left:842.00px;top:12.00px;" width="16" height="16" viewBox="0 0 16 16"><path d="M4.4 4.4L11.6 11.6M11.6 4.4L4.4 11.6" stroke="#e3e3e3" stroke-width="1.4" fill="none"/></svg>
<div class="b" style="left:880px;top:12px;width:16px;height:16px;background:#0a6fc9;"></div><span class="t" style="left:880px;top:7.5px;width:16px;text-align:center;font:bold 18px/22px 'Liberation Sans', sans-serif;color:#fff;letter-spacing:0">a</span>
<span class="t" style="left:903.75px;top:12.1px;width:137.8px;overflow:hidden;line-height:18px;font-family:'Liberation Sans', sans-serif;font-size:12px;font-weight:400;color:#e3e3e3;letter-spacing:0.088px;-webkit-mask-image:linear-gradient(to right,#000 calc(100% - 22px),transparent);mask-image:linear-gradient(to right,#000 calc(100% - 22px),transparent);">Cloud by Atlantic.Net</span>
<svg class="b" style="left:1050.00px;top:12.00px;" width="16" height="16" viewBox="0 0 16 16"><path d="M4.4 4.4L11.6 11.6M11.6 4.4L4.4 11.6" stroke="#e3e3e3" stroke-width="1.4" fill="none"/></svg>
<svg class="b" style="left:1088.00px;top:12.00px;" width="16" height="16" viewBox="0 0 16 16"><path d="M.8 12.300V4.200L4.400 6.900V13.400H1.900A1.100 1.100 0 0 1 .8 12.300Z" fill="#4285f4"/><path d="M11.600 13.400V6.900L15.200 4.200V12.300A1.100 1.100 0 0 1 14.100 13.400Z" fill="#34a853"/><path d="M11.600 3.400V6.900L15.200 4.200V3.700A1.500 1.500 0 0 0 12.800 2.500Z" fill="#fbbc04"/><path d="M4.400 6.900V3.400L8 6.100L11.600 3.400V6.900L8 9.600Z" fill="#ea4335"/><path d="M.8 3.700V4.200L4.400 6.900V3.400L3.200 2.500A1.500 1.500 0 0 0 .8 3.700Z" fill="#c5221f"/></svg>
<span class="t" style="left:1112px;top:12.1px;width:136.5px;overflow:hidden;line-height:18px;font-family:'Liberation Sans', sans-serif;font-size:12px;font-weight:400;color:#e3e3e3;letter-spacing:-0.244px;-webkit-mask-image:linear-gradient(to right,#000 calc(100% - 22px),transparent);mask-image:linear-gradient(to right,#000 calc(100% - 22px),transparent);">zilliz (ID: 2289396) @ 209.208.97.73</span>
<svg class="b" style="left:1257.00px;top:12.00px;" width="16" height="16" viewBox="0 0 16 16"><path d="M4.4 4.4L11.6 11.6M11.6 4.4L4.4 11.6" stroke="#e3e3e3" stroke-width="1.4" fill="none"/></svg>
<svg class="b" style="left:1295.00px;top:12.00px;" width="16" height="16" viewBox="0 0 16 16"><circle cx="8" cy="8" r="5.7" fill="none" stroke="#ff0000" stroke-width="4.5"/><path d="M10.2 5.8 L12.6 3.4" stroke="#202121" stroke-width="0.9"/></svg>
<span class="t" style="left:1319px;top:12.1px;width:136.5px;overflow:hidden;line-height:18px;font-family:'Liberation Sans', sans-serif;font-size:12px;font-weight:400;color:#e3e3e3;letter-spacing:-0.081px;-webkit-mask-image:linear-gradient(to right,#000 calc(100% - 22px),transparent);mask-image:linear-gradient(to right,#000 calc(100% - 22px),transparent);">How to Install PIP on Ubuntu 22.04</span>
<svg class="b" style="left:1464.00px;top:12.00px;" width="16" height="16" viewBox="0 0 16 16"><path d="M4.4 4.4L11.6 11.6M11.6 4.4L4.4 11.6" stroke="#e3e3e3" stroke-width="1.4" fill="none"/></svg>
<svg class="b" style="left:1502.00px;top:12.00px;" width="16" height="16" viewBox="0 0 16 16"><path d="M.4 6.200C1.800 2.300 4.900 .2 8 .2S14.200 2.300 15.600 6.200C13.700 3.900 11 2.900 8 2.900S2.300 3.900 .4 6.200Z" fill="#f37726"/><path d="M.4 9.800C1.800 13.700 4.900 15.800 8 15.800S14.200 13.700 15.600 9.800C13.700 12.100 11 13.100 8 13.100S2.300 12.100 .4 9.800Z" fill="#f37726"/></svg>
<span class="t" style="left:1526px;top:12.1px;width:136.5px;overflow:hidden;line-height:18px;font-family:'Liberation Sans', sans-serif;font-size:12px;font-weight:400;color:#fff;letter-spacing:-0.041px;-webkit-mask-image:linear-gradient(to right,#000 calc(100% - 22px),transparent);mask-image:linear-gradient(to right,#000 calc(100% - 22px),transparent);">Untitled.ipynb - JupyterLab</span>
<svg class="b" style="left:1671.00px;top:12.00px;" width="16" height="16" viewBox="0 0 16 16"><path d="M4.4 4.4L11.6 11.6M11.6 4.4L4.4 11.6" stroke="#e3e3e3" stroke-width="1.4" fill="none"/></svg>
<svg class="b" style="left:1707.00px;top:12.00px;" width="16" height="16" viewBox="0 0 16 16"><path d="M8 3V13M3 8H13" stroke="#e3e3e3" stroke-width="1.6"/></svg>
<div class="b" style="left:1800px;top:19.5px;width:10px;height:1.0px;background:#fff;"></div>
<svg class="b" style="left:1845.00px;top:14.00px;" width="12" height="12" viewBox="0 0 12 12"><path d="M1.5 3.5h7v7h-7z M3.5 3.3V2.2a.7.7 0 0 1 .7-.7h5.6a.7.7 0 0 1 .7.7v5.6a.7.7 0 0 1-.7.7H8.7" fill="none" stroke="#fff" stroke-width="1" stroke-linejoin="round"/></svg>
<svg class="b" style="left:1891.00px;top:14.00px;" width="12" height="12" viewBox="0 0 12 12"><path d="M1 1L11 11M11 1L1 11" stroke="#fff" stroke-width="1.1"/></svg>
<svg class="b" style="left:14.05px;top:54.25px;" width="17.5" height="17.5" viewBox="0 0 20 20"><path d="M16.5 10H4.2M9.3 4.6L3.9 10l5.4 5.4" fill="none" stroke="#e3e3e3" stroke-width="1.9"/></svg>
<svg class="b" style="left:49.05px;top:54.25px;" width="17.5" height="17.5" viewBox="0 0 20 20"><path d="M3.5 10h12.3M10.7 4.6L16.1 10l-5.4 5.4" fill="none" stroke="#777878" stroke-width="1.9"/></svg>
<svg class="b" style="left:85.45px;top:54.25px;" width="17.5" height="17.5" viewBox="0 0 20 20"><path d="M15.6 7.3A6.1 6.1 0 1 0 16.1 11" fill="none" stroke="#e3e3e3" stroke-width="1.9"/><path d="M16.4 3.6v4.3h-4.3" fill="none" stroke="#e3e3e3" stroke-width="1.9"/></svg>
<div class="b" style="left:120px;top:46px;width:1445.5px;height:34px;background:#282828;border-radius:17px;"></div>
<div class="b" style="left:125px;top:51px;width:90.5px;height:24px;background:#3c3c3c;border-radius:12px;"></div>
<svg class="b" style="left:129.00px;top:55.00px;" width="16" height="16" viewBox="0 0 16 16"><path d="M8 2.2L14.6 13.6H1.4Z" fill="none" stroke="#e3e3e3" stroke-width="1.4" stroke-linejoin="round"/><path d="M8 6.4v3.6" stroke="#e3e3e3" stroke-width="1.4"/><circle cx="8" cy="11.7" r=".85" fill="#e3e3e3"/></svg>
<span class="t " style="left:149.00px;top:53.80px;line-height:18px;font-family:'Liberation Sans', sans-serif;font-size:12px;font-weight:700;color:#fff;letter-spacing:-0.353px;">Not secure</span>
<span class="t " style="left:224.00px;top:52.70px;line-height:21px;font-family:'Liberation Sans', sans-serif;font-size:14px;font-weight:400;color:#fff;letter-spacing:-0.233px;">209.208.97.73</span>
<span class="t " style="left:310.50px;top:52.70px;line-height:21px;font-family:'Liberation Sans', sans-serif;font-size:14px;font-weight:400;color:#dcdcdc;letter-spacing:0.109px;">:8888/lab/tree/Untitled.ipynb</span>
<svg class="b" style="left:1533.25px;top:54.50px;" width="17" height="17" viewBox="0 0 18 18"><path d="M9 2.3l2 4.5 4.9.5-3.7 3.3 1.1 4.8L9 12.9l-4.3 2.5 1.1-4.8L2.1 7.3l4.9-.5z" fill="none" stroke="#e3e3e3" stroke-width="1.4" stroke-linejoin="round"/></svg>
<svg class="b" style="left:1583.50px;top:54.50px;" width="17" height="17" viewBox="0 0 17 17"><path d="M8.500 .6a7.900 7.900 0 1 1 0 15.800H.6V8.500A7.900 7.900 0 0 1 8.500 .6Z" fill="#e9f3f1"/><path d="M8.500 1.600a6.900 6.900 0 1 1 0 13.800H1.600V8.500A6.900 6.900 0 0 1 8.500 1.600Z" fill="#11806c"/><text x="8.600" y="12.300" font-family="Liberation Sans, sans-serif" font-weight="700" font-size="10.500" fill="#fff" text-anchor="middle">G</text></svg>
<svg class="b" style="left:1619.00px;top:54.00px;" width="18" height="18" viewBox="0 0 18 18"><path d="M2 7h4l7-4.5v13L6 11H2z" fill="#f26b3a"/><path d="M1.2 7.2h4.6v3.6H1.2z" fill="#2f4a6a"/><path d="M3 10.8h2.4l.6 3.7H3.8z" fill="#2f4a6a"/><path d="M14.2 2v14" stroke="#e6e6e6" stroke-width="1.2"/></svg>
<svg class="b" style="left:1655.50px;top:54.50px;" width="17" height="17" viewBox="0 0 17 17"><circle cx="8.5" cy="8.5" r="8" fill="#fff"/><path d="M4 6.5l5-2.5 4.5 2.2-1 6-5 1.6-3-2.3z" fill="none" stroke="#1fa99a" stroke-width="1.2"/><path d="M5 9.5l4-1.5 4 1.2" fill="none" stroke="#f08a24" stroke-width="1.2"/></svg>
<svg class="b" style="left:1691.50px;top:54.50px;" width="17" height="17" viewBox="0 0 17 17"><defs><radialGradient id="pg" cx=".5" cy=".5" r=".5"><stop offset="0" stop-color="#6d3df5"/><stop offset=".7" stop-color="#4a1fc8"/><stop offset="1" stop-color="#3a159e"/></radialGradient></defs><circle cx="8.5" cy="8.5" r="8" fill="url(#pg)"/><path d="M5.4 6.6h6.2L8.5 11.6z" fill="#fff" stroke="#fff" stroke-width="1" stroke-linejoin="round"/></svg>
<svg class="b" style="left:1727.00px;top:54.00px;" width="18" height="18" viewBox="0 0 18 18"><circle cx="8.5" cy="8.5" r="7.6" fill="#d9c178" stroke="#f2f2f2" stroke-width="1"/><path d="M6 2v13M8.5 3v5h3.5M9 11h3.5M4 6v6" stroke="#b8963a" stroke-width="1" fill="none"/><circle cx="13" cy="13.4" r="3" fill="#fff" stroke="#bdbdbd" stroke-width=".8"/></svg>
<svg class="b" style="left:1762px;top:52px" width="22" height="20" viewBox="1762 52 22 20"><path d="M1768 56.900H1776.060a2 2 0 0 1 2 2V67a2 2 0 0 1-2 2H1768a2 2 0 0 1-2-2V66a2.400 2.400 0 0 0 0-4.800V58.900a2 2 0 0 1 2-2Z" fill="none" stroke="#e3e3e3" stroke-width="1.900" stroke-linejoin="round"/><path d="M1770.600 56.500v-1.300a1.700 1.700 0 0 1 3.400 0v1.300z" fill="#e3e3e3"/><path d="M1778.800 61.200h.9a1.600 1.600 0 0 1 0 3.200h-.9z" fill="#e3e3e3"/></svg>
<div class="b" style="left:1798px;top:55px;width:1.599999999999909px;height:16px;background:#646464;"></div>
<svg class="b" style="left:1815.75px;top:52.95px;" width="20.5" height="20.5" viewBox="0 0 18 18"><path d="M9 2.200v8.800M5 7.200L9 11.200l4-4M2.900 12.200v2.900h12.200v-2.900" fill="none" stroke="#e3e3e3" stroke-width="1.600"/></svg>
<div class="b" style="left:1852px;top:53px;width:20px;height:20px;border-radius:50%;overflow:hidden;background:linear-gradient(#9aa86e 0%,#7e9a58 30%,#86a860 52%,#8d8378 60%,#9c928a 100%);"><div class="b" style="left:0;top:0;width:7px;height:9px;background:#a8a46a;opacity:.7"></div><div class="b" style="left:13px;top:1px;width:7px;height:10px;background:#6f8f50;opacity:.8"></div><div class="b" style="left:8.500px;top:2.500px;width:3px;height:3px;border-radius:50%;background:#39405a"></div><div class="b" style="left:7.800px;top:5px;width:4.200px;height:8px;background:#1f2c4e;border-radius:1px"></div><div class="b" style="left:9px;top:12.500px;width:3px;height:4px;background:#2a2f3c"></div><div class="b" style="left:10.500px;top:15.500px;width:2.500px;height:2.500px;background:#e0353a"></div></div>
<div class="b" style="left:1896.5px;top:55.9px;width:3px;height:3px;border-radius:50%;background:#e3e3e3"></div>
<div class="b" style="left:1896.5px;top:61.5px;width:3px;height:3px;border-radius:50%;background:#e3e3e3"></div>
<div class="b" style="left:1896.5px;top:67.1px;width:3px;height:3px;border-radius:50%;background:#e3e3e3"></div>
<div class="b" style="left:19px;top:93.2px;width:3.25px;height:3.299999999999997px;background:#e94235;"></div>
<div class="b" style="left:24px;top:93.2px;width:3.25px;height:3.299999999999997px;background:#e94235;"></div>
<div class="b" style="left:29px;top:93.2px;width:3.25px;height:3.299999999999997px;background:#e94235;"></div>
<div class="b" style="left:19px;top:98.3px;width:3.25px;height:3.299999999999997px;background:#34a853;"></div>
<div class="b" style="left:24px;top:98.3px;width:3.25px;height:3.299999999999997px;background:#4285f4;"></div>
<div class="b" style="left:29px;top:98.3px;width:3.25px;height:3.299999999999997px;background:#fbbc04;"></div>
<div class="b" style="left:19px;top:103.4px;width:3.25px;height:3.299999999999997px;background:#34a853;"></div>
<div class="b" style="left:24px;top:103.4px;width:3.25px;height:3.299999999999997px;background:#fbbc04;"></div>
<div class="b" style="left:29px;top:103.4px;width:3.25px;height:3.299999999999997px;background:#fbbc04;"></div>
<span class="t " style="left:40.00px;top:90.60px;line-height:18px;font-family:'Liberation Sans', sans-serif;font-size:12px;font-weight:400;color:#e3e3e3;letter-spacing:-0.090px;">Apps</span>
<svg class="b" style="left:83.00px;top:92.00px;" width="16" height="16" viewBox="0 0 16 16"><path d="M1.7 1.7h4.6v4.6H1.7zM9.7 1.7h4.6v4.6H9.7zM1.7 9.7h4.6v4.6H1.7zM9.7 9.7h4.6v4.6H9.7z" fill="none" stroke="#e3e3e3" stroke-width="1.4"/></svg>
<div class="b" style="left:113.1px;top:92px;width:1.5px;height:16px;background:#686868;"></div>
<svg class="b" style="left:129.85px;top:91.15px;" width="18.3" height="18.3" viewBox="0 0 16 16"><path d="M1.75 3.5h4.1l1.6 1.7h6.8v7.3H1.75z" fill="none" stroke="#e3e3e3" stroke-width="1.4" stroke-linejoin="round"/></svg>
<span class="t " style="left:155.00px;top:90.60px;line-height:18px;font-family:'Liberation Sans', sans-serif;font-size:12px;font-weight:400;color:#e3e3e3;letter-spacing:-0.586px;">WORK</span>
<svg class="b" style="left:206.85px;top:91.15px;" width="18.3" height="18.3" viewBox="0 0 16 16"><path d="M1.75 3.5h4.1l1.6 1.7h6.8v7.3H1.75z" fill="none" stroke="#e3e3e3" stroke-width="1.4" stroke-linejoin="round"/></svg>
<span class="t " style="left:232.00px;top:90.60px;line-height:18px;font-family:'Liberation Sans', sans-serif;font-size:12px;font-weight:400;color:#e3e3e3;letter-spacing:-0.500px;">HOME</span>
<svg class="b" style="left:282.50px;top:91.50px;" width="17" height="17" viewBox="0 0 17 17"><path d="M8.5 .8l7 3.6v8.2l-7 3.6-7-3.6V4.4z" fill="#f58536"/><path d="M8.5 8l7-3.6v8.2l-7 3.6z" fill="#e0661a"/><path d="M8.5 8l-7-3.6 7-3.6 7 3.6z" fill="#f8993d"/></svg>
<span class="t " style="left:305.00px;top:90.60px;line-height:18px;font-family:'Liberation Sans', sans-serif;font-size:12px;font-weight:400;color:#e3e3e3;letter-spacing:-0.156px;">AWS-Xplor</span>
<svg class="b" style="left:378.50px;top:91.50px;" width="17" height="17" viewBox="0 0 17 17"><circle cx="8.5" cy="8.5" r="5.9" fill="none" stroke="#002d85" stroke-width="4.2"/></svg>
<span class="t " style="left:401.00px;top:90.60px;line-height:18px;font-family:'Liberation Sans', sans-serif;font-size:12px;font-weight:400;color:#e3e3e3;letter-spacing:-0.086px;">Okta</span>
<svg class="b" style="left:442.50px;top:91.50px;" width="17" height="17" viewBox="0 0 17 17"><path d="M16 1H8.2a3.5 3.5 0 0 0 3.5 3.5h1.4v1.4A3.5 3.5 0 0 0 16.6 9.4V1.6A.6.6 0 0 0 16 1Z" fill="#2f8bff"/><path d="M12.1 4.9H4.3a3.5 3.5 0 0 0 3.5 3.5h1.4v1.4a3.5 3.5 0 0 0 3.5 3.5V5.5a.6.6 0 0 0-.6-.6Z" fill="#2a7de1"/><path d="M8.2 8.8H.4a3.5 3.5 0 0 0 3.5 3.5h1.4v1.4a3.5 3.5 0 0 0 3.5 3.5V9.4a.6.6 0 0 0-.6-.6Z" fill="#2f8bff"/></svg>
<span class="t " style="left:464.50px;top:90.60px;line-height:18px;font-family:'Liberation Sans', sans-serif;font-size:12px;font-weight:400;color:#e3e3e3;letter-spacing:-0.694px;">Q3 EPIC</span>
<div class="b" style="left:1788.3px;top:92px;width:1.5px;height:16px;background:#686868;"></div>
<svg class="b" style="left:1804.65px;top:91.15px;" width="18.3" height="18.3" viewBox="0 0 16 16"><path d="M1.75 3.5h4.1l1.6 1.7h6.8v7.3H1.75z" fill="none" stroke="#e3e3e3" stroke-width="1.4" stroke-linejoin="round"/></svg>
<span class="t " style="left:1830.00px;top:90.60px;line-height:18px;font-family:'Liberation Sans', sans-serif;font-size:12px;font-weight:400;color:#e3e3e3;letter-spacing:-0.130px;">All Bookmarks</span>
<div class="b" style="left:0px;top:1152px;width:1920px;height:48px;background:linear-gradient(90deg,#e3dcda 0%,#e6dcd8 12%,#e9dcd6 30%,#eadcd6 50%,#e9ddd8 75%,#e6dedb 100%);"></div>
<div class="b" style="left:0px;top:1152px;width:1920px;height:1px;background:#cfc8c5;"></div>
<svg class="b" style="left:18.00px;top:1163.00px;" width="26" height="26" viewBox="0 0 26 26"><defs><linearGradient id="cl" x1="0" y1="0" x2="0" y2="1"><stop offset="0" stop-color="#e6eefc"/><stop offset=".6" stop-color="#c4d6f8"/><stop offset="1" stop-color="#8fb2f0"/></linearGradient><mask id="mn"><rect width="26" height="26" fill="#fff"/><circle cx="4.300" cy="2.800" r="6.300" fill="#000"/></mask></defs><circle cx="6.800" cy="6" r="6.600" fill="#f59a1b" mask="url(#mn)"/><path d="M4.800 23A3.800 3.800 0 0 1 3.600 15.600A5 5 0 0 1 10.700 11.400A6.300 6.300 0 0 1 22 14.800A4.200 4.200 0 0 1 20.600 23Z" fill="url(#cl)"/></svg>
<div class="b" style="left:30px;top:1157.800px;width:16px;height:16px;border-radius:50%;background:#c42b1c"></div>
<span class="t" style="left:30px;top:1157.800px;width:16px;text-align:center;font:11px/16px 'Liberation Sans', sans-serif;color:#fff;letter-spacing:0">1</span>
<span class="t " style="left:50.60px;top:1159.00px;line-height:18px;font-family:'Liberation Sans', sans-serif;font-size:12px;font-weight:400;color:#1b1b1b;letter-spacing:-0.853px;">12°C</span>
<span class="t " style="left:50.60px;top:1175.30px;line-height:18px;font-family:'Liberation Sans', sans-serif;font-size:12px;font-weight:400;color:#5a5553;letter-spacing:0.177px;">Mostly cloudy</span>
<div class="b" style="left:506.9px;top:1164.8px;width:10.899999999999977px;height:10.900000000000091px;background:linear-gradient(135deg,#4ccbf6,#1f9cee);border-radius:1px;"></div>
<div class="b" style="left:519.1px;top:1164.8px;width:10.899999999999977px;height:10.900000000000091px;background:linear-gradient(135deg,#36b6f2,#1687e3);border-radius:1px;"></div>
<div class="b" style="left:506.9px;top:1177.0px;width:10.899999999999977px;height:10.900000000000091px;background:linear-gradient(135deg,#1f9cee,#0f7ad8);border-radius:1px;"></div>
<div class="b" style="left:519.1px;top:1177.0px;width:10.899999999999977px;height:10.900000000000091px;background:linear-gradient(135deg,#1687e3,#0b68cd);border-radius:1px;"></div>
<div class="b" style="left:543.5px;top:1160.5px;width:218.70000000000005px;height:31.0px;background:#f8f0ed;border-radius:15.5px;border:1px solid #ddd1cd;box-sizing:border-box;background:linear-gradient(90deg,#fbf5f2,#f8efeb);box-shadow:0 1px 1px rgba(120,90,80,.18);"></div>
<svg class="b" style="left:553.90px;top:1168.60px;" width="16" height="16" viewBox="0 0 18 18"><circle cx="7.700" cy="7.700" r="5.600" fill="none" stroke="#1f1f1f" stroke-width="1.700"/><path d="M11.800 11.800L16.300 16.300" stroke="#1f1f1f" stroke-width="1.900" stroke-linecap="round"/></svg>
<span class="t " style="left:580.00px;top:1165.80px;line-height:21px;font-family:'Liberation Sans', sans-serif;font-size:14px;font-weight:400;color:#5c5856;letter-spacing:-0.560px;">Search</span>
<div class="b" style="left:708.5px;top:1163px;width:51.700000000000045px;height:26px;background:#e9e0dd;border-radius:13px;"></div>
<svg class="b" style="left:720.95px;top:1163.05px;" width="26.5" height="26.5" viewBox="0 0 24 24"><defs><linearGradient id="bc" x1="0" y1="0" x2="0" y2="1"><stop offset="0" stop-color="#ee9a12"/><stop offset=".5" stop-color="#d9820a"/><stop offset=".52" stop-color="#c77406"/><stop offset="1" stop-color="#a85c02"/></linearGradient></defs><path d="M9 6V5a1.400 1.400 0 0 1 1.400-1.400h3.200A1.400 1.400 0 0 1 15 5v1" fill="none" stroke="#3a2a14" stroke-width="1.600"/><rect x="2" y="5.800" width="20" height="14.800" rx="1.800" fill="url(#bc)"/><rect x="10.300" y="10.800" width="3.400" height="3.400" fill="#ffd23a" stroke="#e0a818" stroke-width=".5"/></svg>
<div class="b" style="left:775px;top:1170.75px;width:18px;height:16.0px;background:#1c1c1c;border-radius:1.500px;"></div>
<div class="b" style="left:781px;top:1164.9px;width:17.75px;height:15.599999999999909px;background:linear-gradient(180deg,rgba(255,255,255,.97),rgba(225,225,225,.9));border-radius:1.500px;box-shadow:0 0 1px rgba(0,0,0,.3);"></div>
<svg class="b" style="left:818.50px;top:1162.80px;" width="25" height="25" viewBox="0 0 24 24"><defs><linearGradient id="cp1" x1=".7" y1="0" x2=".2" y2="1"><stop offset="0" stop-color="#1e7bff"/><stop offset=".45" stop-color="#26c6a0"/><stop offset=".75" stop-color="#b9dc3a"/><stop offset="1" stop-color="#ffd21f"/></linearGradient><linearGradient id="cp2" x1=".7" y1="0" x2=".25" y2="1"><stop offset="0" stop-color="#5a7cff"/><stop offset=".4" stop-color="#c466f2"/><stop offset=".75" stop-color="#ff6a9a"/><stop offset="1" stop-color="#ff8a3c"/></linearGradient></defs><path d="M9.5 1.500h6a3 3 0 0 1 2.900 2.200l.9 3h-4.300a3 3 0 0 0-2.900 2.200l-1.600 5.600a3 3 0 0 1-2.900 2.200H4a2.800 2.800 0 0 1-2.700-3.600l2.600-9A3.600 3.600 0 0 1 7.400 1.500z" fill="url(#cp1)"/><path d="M14.500 22.500h-6a3 3 0 0 1-2.900-2.200l-.9-3h4.300a3 3 0 0 0 2.900-2.200l1.600-5.600a3 3 0 0 1 2.900-2.200H20a2.800 2.800 0 0 1 2.700 3.600l-2.600 9a3.600 3.600 0 0 1-3.500 2.600z" fill="url(#cp2)"/></svg>
<svg class="b" style="left:862.50px;top:1163.20px;" width="25" height="25" viewBox="0 0 25 25"><path d="M.5 3.500a1.500 1.500 0 0 1 1.500-1.500h6l2.500 2.500H.5z" fill="#e0a40c"/><rect x=".5" y="4" width="24" height="18" rx="1.200" fill="#f8c93a"/><path d="M.5 6h24v5H.5z" fill="#fbd75b"/><path d="M5 22v-5.500a2 2 0 0 1 2-2h11a2 2 0 0 1 2 2V22z" fill="#1489d8"/><rect x="8" y="17" width="9" height="1.700" rx=".8" fill="#0f6cbd"/></svg>
<svg class="b" style="left:906.50px;top:1164.20px;" width="24" height="24" viewBox="0 0 24 24"><path d="M7 6V3.500A1.500 1.500 0 0 1 8.500 2h7A1.500 1.500 0 0 1 17 3.500V6" fill="none" stroke="#2db2f0" stroke-width="1.800"/><path d="M.5 5.500h23v14.500a3 3 0 0 1-3 3H3.500a3 3 0 0 1-3-3z" fill="#134a86"/><path d="M.5 5.500h23v6H.5z" fill="#17589c" opacity=".6"/><rect x="7.300" y="9.800" width="4.200" height="4.200" fill="#f25022"/><rect x="12.500" y="9.800" width="4.200" height="4.200" fill="#7fba00"/><rect x="7.300" y="15" width="4.200" height="4.200" fill="#00a4ef"/><rect x="12.500" y="15" width="4.200" height="4.200" fill="#ffb900"/></svg>
<div class="b" style="left:948px;top:1158px;width:34px;height:37px;background:#f1e7e3;border-radius:4px;border:1px solid #e4d8d3;box-sizing:border-box;"></div>
<div class="b" style="left:944px;top:1157px;width:34px;height:38.5px;background:#f6ece8;border-radius:4px;border:1px solid #e6dad5;box-sizing:border-box;"></div>
<svg class="b" style="left:950.50px;top:1163.50px;" width="24.5" height="24.5" viewBox="0 0 48 48"><path d="M3.22 12A24 24 0 0 1 44.78 12L24 12A12 12 0 0 0 13.61 30Z" fill="#ea4335"/><path d="M44.78 12A24 24 0 0 1 24 48L34.39 30A12 12 0 0 0 24 12Z" fill="#fbc116"/><path d="M24 48A24 24 0 0 1 3.22 12L13.61 30A12 12 0 0 0 34.39 30Z" fill="#2da94f"/><circle cx="24" cy="24" r="11.6" fill="#fff"/><circle cx="24" cy="24" r="9.3" fill="#4285f4"/></svg>
<div class="b" style="left:955px;top:1192.25px;width:16px;height:3.0px;background:#0b6cd0;border-radius:1.500px;"></div>
<svg class="b" style="left:994.00px;top:1163.50px;" width="25" height="25" viewBox="0 0 25 25"><circle cx="19.800" cy="6.800" r="2.500" fill="#5059c9"/><path d="M16.500 10.500h7a1 1 0 0 1 1 1v5.500a3.500 3.500 0 0 1-7 0z" fill="#5059c9"/><circle cx="13.500" cy="5.500" r="3.500" fill="#7b83eb"/><path d="M8 10.500h11a1 1 0 0 1 1 1v7a5.500 5.500 0 0 1-11 0z" fill="#7b83eb"/><rect x=".8" y="7" width="12" height="12" rx="1.200" fill="#4b53bc"/><path d="M3.800 10.200h6v1.700H7.700v4.900H5.900v-4.900H3.800z" fill="#fff"/></svg>
<div class="b" style="left:1038.8px;top:1164px;width:24.200000000000045px;height:24px;background:#e95420;"></div>
<svg class="b" style="left:1039.00px;top:1164.00px;" width="24" height="24" viewBox="0 0 24 24"><circle cx="12" cy="12" r="6.200" fill="none" stroke="#fff" stroke-width="2"/><circle cx="4.800" cy="12" r="2.300" fill="#fff" stroke="#e95420" stroke-width="1"/><circle cx="15.600" cy="5.800" r="2.300" fill="#fff" stroke="#e95420" stroke-width="1"/><circle cx="15.600" cy="18.200" r="2.300" fill="#fff" stroke="#e95420" stroke-width="1"/></svg>
<svg class="b" style="left:1082.50px;top:1163.50px;" width="25" height="25" viewBox="0 0 25 25"><rect x=".5" y="3" width="24" height="18" rx="1.500" fill="#2d2d2d"/><rect x=".5" y="3" width="24" height="3" rx="1" fill="#4a4a4a"/><rect x="1.500" y="3" width="7" height="2.600" fill="#9a9a9a"/><rect x="9" y="3" width="7" height="2.600" fill="#767676"/><path d="M4 9.500l4.500 3.200L4 16" fill="none" stroke="#ccc" stroke-width="2"/><rect x="11.500" y="16" width="7" height="1.800" fill="#fff"/></svg>
<svg class="b" style="left:1126.00px;top:1163.50px;" width="25" height="25" viewBox="0 0 25 25"><path d="M4.500 3h19.500l-4 18H.5z" fill="#3b78d8"/><path d="M4.500 3h19.500l-1.300 6H3.200z" fill="#4a8af0" opacity=".5"/><path d="M6 7.500l6.500 5-7.500 5" fill="none" stroke="#fff" stroke-width="2.200" stroke-linecap="round"/><rect x="12" y="16.500" width="6" height="1.800" fill="#fff"/></svg>
<svg class="b" style="left:1170.00px;top:1163.50px;" width="25" height="25" viewBox="0 0 25 25"><defs><linearGradient id="np" x1="0" y1="0" x2="0" y2="1"><stop offset="0" stop-color="#fff"/><stop offset=".4" stop-color="#e8f3cf"/><stop offset=".7" stop-color="#9ed33c"/><stop offset="1" stop-color="#52b020"/></linearGradient></defs><path d="M3 .8h13l4 4v19H3z" fill="url(#np)" stroke="#8a8a8a" stroke-width=".8"/><path d="M7.500 7v8.500M9 7v8.500" stroke="#222" stroke-width="1.100"/><path d="M11 11h5" stroke="#222" stroke-width="1.400" stroke-dasharray="1.500 1"/><path d="M22.500 1.500l1.800 1-8.500 16-2.200 1.200.3-2.500z" fill="#e8a51c" stroke="#a86b10" stroke-width=".5"/><path d="M22.500 1.500l1.800 1 .6-1.200-1.700-1z" fill="#c0392b"/></svg>
<svg class="b" style="left:1214.00px;top:1163.00px;" width="26" height="26" viewBox="0 0 26 26"><defs><linearGradient id="rd" x1="0" y1="0" x2="1" y2="1"><stop offset="0" stop-color="#1a2fd0"/><stop offset=".5" stop-color="#2d4fe8"/><stop offset="1" stop-color="#c8d4ff"/></linearGradient></defs><path d="M2.500 1.500l17 2.500-1.500 12.500L1.500 14z" fill="url(#rd)" stroke="#c8c8d4" stroke-width="1"/><path d="M8 15l5 1v3.500H8z" fill="#d0d0d0"/><ellipse cx="11" cy="21" rx="6.500" ry="2.500" fill="#d8d8d8"/><circle cx="18.500" cy="19" r="5" fill="#dcdcdc" stroke="#b0b0b0" stroke-width=".6"/><path d="M15.500 19.500l2.500-1.800v3.600zM21.500 18.500l-2.500 1.800v-3.600z" fill="#2e9a3a"/></svg>
<svg class="b" style="left:1257.50px;top:1163.00px;" width="26" height="26" viewBox="0 0 26 26"><defs><linearGradient id="ws1" x1="0" y1="0" x2="1" y2="1"><stop offset="0" stop-color="#07c3f2"/><stop offset=".5" stop-color="#21d0e0"/><stop offset="1" stop-color="#fcf84a"/></linearGradient></defs><path d="M1.500 1h14l9 7.500-2 13.500-10 3-10-1.500z" fill="url(#ws1)"/><path d="M1.500 1h14l4 4L3 15z" fill="#0a7bd8" opacity=".85"/><path d="M2.500 19l8 5.500 13-3.500-21 .5z" fill="#fcf84a"/><rect x="5" y="5" width="15" height="15" fill="#000"/><path d="M7 17.200h5.500" stroke="#fff" stroke-width="1.100"/><text x="12.600" y="13" font-family="Liberation Sans" font-weight="700" font-size="7.200" fill="#fff" text-anchor="middle" letter-spacing="-.3">WS</text></svg>
<svg class="b" style="left:1302.00px;top:1163.00px;" width="26" height="26" viewBox="0 0 26 26"><path d="M7 5.500L15 .8l9.500 5.500v12.500a2 2 0 0 1-2 2H7z" fill="#1490df"/><path d="M15 .8l9.500 5.500-9.500 6z" fill="#0a63c9"/><path d="M7 5.500l8-4.700v11.500z" fill="#28a8ea"/><path d="M24.500 10l-14 11H22.500a2 2 0 0 0 2-2z" fill="#35c1f1"/><path d="M7 12.500l8 5.500 9.500-8v9a2 2 0 0 1-2 2H9a2 2 0 0 1-2-2z" fill="#1e9be8" opacity=".7"/><rect x=".5" y="6.500" width="14" height="13" rx="1.200" fill="#0f6cbd"/><ellipse cx="7.500" cy="13" rx="3.300" ry="3.800" fill="none" stroke="#fff" stroke-width="1.800"/></svg>
<svg class="b" style="left:1345.50px;top:1164.00px;" width="26" height="26" viewBox="0 0 26 26"><path d="M2 2.500c3 .5 5 2 7 4" fill="none" stroke="#555" stroke-width="1"/><path d="M5.500 10.500c1-4 6-5.500 12-2.500 5 2.500 8 6.500 6.500 9-1.500 2.500-7 2-12-.5s-7.500-3.500-6.500-6z" fill="#d0d0d0" stroke="#6a6a6a" stroke-width=".9"/><path d="M11 6.800l-2.500 4.700 5.500 2.500" fill="none" stroke="#888" stroke-width=".8"/><path d="M6 12.500c2 3.500 12 7.500 17.500 5.500" fill="none" stroke="#555" stroke-width="1.200"/></svg>
<svg class="b" style="left:1390.00px;top:1163.50px;" width="25" height="25" viewBox="0 0 25 25"><defs><linearGradient id="ed1" x1="0" y1="0" x2="1" y2="0"><stop offset="0" stop-color="#35c1f1"/><stop offset=".6" stop-color="#3ccf8e"/><stop offset="1" stop-color="#7ddb5a"/></linearGradient><linearGradient id="ed2" x1="0" y1="0" x2="0" y2="1"><stop offset="0" stop-color="#1b9de2"/><stop offset="1" stop-color="#0c59a4"/></linearGradient></defs><circle cx="12.500" cy="12.500" r="12" fill="url(#ed1)"/><path d="M.5 13C.5 6 6 2.500 11 4c-5 1-7 5-6 9.500 1 5 5.500 8.500 11 8 3-.3 5.500-2 7-4-1.500 4.500-6 7.500-10.500 7.500A12 12 0 0 1 .5 13z" fill="url(#ed2)"/><path d="M5 13.500c0-4 3.500-7.500 8-7.500 5 0 8 3.500 8 6.500 0 2.500-2 4-4 4-2.500 0-3.500-1.500-3-2.500.8-1.500.5-3.500-2-4-3-.5-5.500 2-5.500 5 0 1 .2 2 .5 2.500-1.300-.8-2-2.500-2-4z" fill="#1279c9"/><path d="M12.500 9.500c2.500.5 3 2.500 2 4.500-.5 1 .5 2.500 3 2.500 1.500 0 3-.8 4-2-1 2.500-3.500 4.500-6.500 4.500-3.500 0-5.500-2.500-5.500-5 0-2.500 1.500-4.500 3-4.500z" fill="#f4ebe8"/></svg>
<div class="b" style="left:872px;top:1192.3px;width:6px;height:2.5px;background:#7a7371;border-radius:1.300px;"></div>
<div class="b" style="left:1091.5px;top:1192.3px;width:6.0px;height:2.5px;background:#7a7371;border-radius:1.300px;"></div>
<div class="b" style="left:1179.5px;top:1192.3px;width:6.0px;height:2.5px;background:#7a7371;border-radius:1.300px;"></div>
<div class="b" style="left:1267.5px;top:1192.3px;width:6.0px;height:2.5px;background:#7a7371;border-radius:1.300px;"></div>
<div class="b" style="left:1355.5px;top:1192.3px;width:6.0px;height:2.5px;background:#7a7371;border-radius:1.300px;"></div>
<div class="b" style="left:1399.5px;top:1192.3px;width:6.0px;height:2.5px;background:#7a7371;border-radius:1.300px;"></div>
<svg class="b" style="left:1702.00px;top:1168.00px;" width="16" height="16" viewBox="0 0 16 16"><path d="M3.300 10.300L8 5.600l4.700 4.700" fill="none" stroke="#1b1b1b" stroke-width="1.300"/></svg>
<svg class="b" style="left:1733.00px;top:1166.50px;" width="18" height="18" viewBox="0 0 18 18"><path d="M1.300 6.800a11 11 0 0 1 15.400 0M3.700 9.500a7.500 7.500 0 0 1 10.600 0M6.100 12.100a4 4 0 0 1 5.800 0" fill="none" stroke="#1b1b1b" stroke-width="1.200"/><circle cx="9" cy="14.300" r="1.100" fill="#1b1b1b"/></svg>
<svg class="b" style="left:1756.50px;top:1167.00px;" width="18" height="18" viewBox="0 0 18 18"><path d="M2 6.800h2.700l3.600-3.300v11l-3.600-3.300H2z" fill="none" stroke="#1b1b1b" stroke-width="1.100" stroke-linejoin="round"/><path d="M11.500 6.700l4.600 4.600M16.100 6.700l-4.600 4.600" stroke="#1b1b1b" stroke-width="1.100"/></svg>
<svg class="b" style="left:1781.00px;top:1167.00px;" width="18" height="18" viewBox="0 0 18 18"><rect x="1.500" y="5" width="13" height="8" rx="1.800" fill="none" stroke="#1b1b1b" stroke-width="1.100"/><rect x="3" y="6.500" width="4" height="5" rx=".6" fill="#1b1b1b"/><path d="M15.800 7.700v2.600" stroke="#1b1b1b" stroke-width="1.600" stroke-linecap="round"/></svg>
<span class="t " style="left:1848.50px;top:1159.00px;line-height:18px;font-family:'Liberation Sans', sans-serif;font-size:12px;font-weight:400;color:#1b1b1b;letter-spacing:-0.366px;">21:32</span>
<span class="t " style="left:1815.40px;top:1175.30px;line-height:18px;font-family:'Liberation Sans', sans-serif;font-size:12px;font-weight:400;color:#1b1b1b;letter-spacing:0.124px;">23/10/2024</span>
<svg class="b" style="left:1883.00px;top:1167.00px;" width="18" height="18" viewBox="0 0 18 18"><path d="M9 1.500a5.200 5.200 0 0 1 5.200 5.200v3.800l1.500 2.500H2.300l1.500-2.500V6.700A5.200 5.200 0 0 1 9 1.500z" fill="#0a3a9e"/><path d="M6.800 14.300h4.400a2.200 2.200 0 0 1-4.400 0z" fill="#0a3a9e"/></svg>
</body></html>
